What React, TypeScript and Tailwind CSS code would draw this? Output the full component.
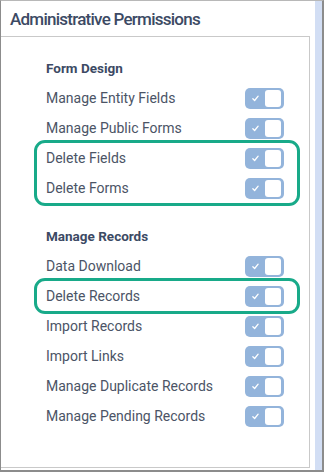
import React from "react";

type Row = { label: string; boxed?: boolean };

const formDesign: Row[] = [
    { label: "Manage Entity Fields" },
    { label: "Manage Public Forms" },
    { label: "Delete Fields", boxed: true },
    { label: "Delete Forms", boxed: true },
];

const manageRecords: Row[] = [
    { label: "Data Download" },
    { label: "Delete Records", boxed: true },
    { label: "Import Records" },
    { label: "Import Links" },
    { label: "Manage Duplicate Records" },
    { label: "Manage Pending Records" },
];

function Toggle() {
    return (
        <div className="flex h-[21px] w-[39px] items-center justify-between rounded-[5px] bg-[#93b4db] pl-[7px] pr-[3px]">
            <svg width="7" height="7" viewBox="0 0 8 8" fill="none">
                <path d="M1 4.3 L3 6.3 L7 1.3" stroke="white" strokeWidth="1.5" strokeLinecap="round" strokeLinejoin="round" />
            </svg>
            <span className="h-[17px] w-[16px] rounded-[3px] bg-white" />
        </div>
    );
}

function PermRow({ label }: { label: string }) {
    return (
        <div className="flex h-[30px] items-center justify-between">
            <span className="text-[14px] text-[#4b5466]">{label}</span>
            <Toggle />
        </div>
    );
}

function Group({ rows }: { rows: Row[] }) {
    // consecutive boxed rows share one outlined block
    const blocks: { boxed: boolean; rows: Row[] }[] = [];
    for (const r of rows) {
        const last = blocks[blocks.length - 1];
        if (last && last.boxed === !!r.boxed) last.rows.push(r);
        else blocks.push({ boxed: !!r.boxed, rows: [r] });
    }
    return (
        <div>
            {blocks.map((b, i) =>
                b.boxed ? (
                    <div
                        key={i}
                        className="-my-[3px] -ml-[12px] -mr-[16px] rounded-[11px] border-[3px] border-[#18aa89] pl-[9px] pr-[13px]"
                    >
                        {b.rows.map((r) => (
                            <PermRow key={r.label} label={r.label} />
                        ))}
                    </div>
                ) : (
                    <div key={i}>
                        {b.rows.map((r) => (
                            <PermRow key={r.label} label={r.label} />
                        ))}
                    </div>
                )
            )}
        </div>
    );
}

export default function App() {
    return (
        <div
            className="flex h-[472px] w-[324px] border-b-2 border-l border-r-2 border-t border-b-[#8c8c8c] border-l-[#8c8c8c] border-r-[#8c8c8c] border-t-[#b8b8b8] bg-white"
            style={{ fontFamily: "Roboto, 'Liberation Sans', sans-serif" }}
        >
            <div className="flex flex-1 flex-col">
                <div className="flex h-[35px] items-center pl-[9px] pt-[2px]">
                    <h1 className="text-[17px] font-medium tracking-[-0.75px] text-[#3c4a64]">Administrative Permissions</h1>
                </div>
                <div className="mr-[5px] mb-[2px] flex-1 border-r border-t border-b border-[#c9c9c9] pl-[45px] pr-[25px] pt-[16px]">
                    <div className="flex h-[30px] items-center text-[13.5px] font-bold text-[#3c4a64]">Form Design</div>
                    <Group rows={formDesign} />
                    <div className="mt-[18px] flex h-[30px] items-center text-[13.5px] font-bold text-[#3c4a64]">
                        Manage Records
                    </div>
                    <Group rows={manageRecords} />
                </div>
            </div>
            <div className="w-[7px] bg-[#d2def4]" />
        </div>
    );
}
